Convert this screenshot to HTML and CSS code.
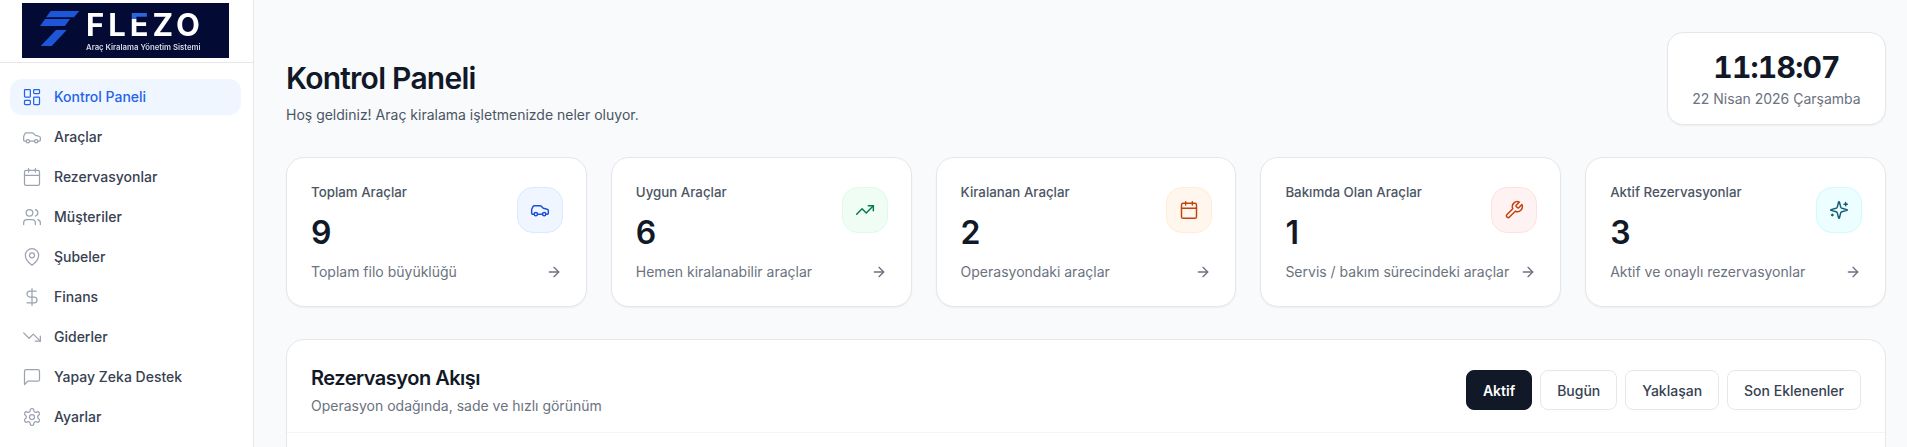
FILE: index.html
```html
<!DOCTYPE html>
<html lang="tr">
<head>
  <meta charset="UTF-8">
  <title>Kontrol Paneli</title>
  <meta name="viewport" content="width=device-width, initial-scale=1">
  <link rel="stylesheet" href="styles.css">
</head>
<body>
  <svg class="icon-defs" aria-hidden="true">
    <defs>
      <symbol id="i-dashboard" viewBox="0 0 24 24"><rect width="7" height="9" x="3" y="3" rx="1"/><rect width="7" height="5" x="14" y="3" rx="1"/><rect width="7" height="9" x="14" y="12" rx="1"/><rect width="7" height="5" x="3" y="16" rx="1"/></symbol>
      <symbol id="i-car" viewBox="0 0 24 24"><path d="M19 17h2c.6 0 1-.4 1-1v-3c0-.9-.7-1.700-1.500-1.900C18.700 10.600 16 10 16 10s-1.300-1.400-2.200-2.300c-.5-.4-1.100-.7-1.800-.7H5c-.6 0-1.100.4-1.400.9l-1.400 2.900A3.700 3.700 0 0 0 2 12v4c0 .6.4 1 1 1h2"/><circle cx="7" cy="17" r="2"/><path d="M9 17h6"/><circle cx="17" cy="17" r="2"/></symbol>
      <symbol id="i-calendar" viewBox="0 0 24 24"><path d="M8 2v4"/><path d="M16 2v4"/><rect width="18" height="18" x="3" y="4" rx="2"/><path d="M3 10h18"/></symbol>
      <symbol id="i-users" viewBox="0 0 24 24"><path d="M16 21v-2a4 4 0 0 0-4-4H6a4 4 0 0 0-4 4v2"/><circle cx="9" cy="7" r="4"/><path d="M22 21v-2a4 4 0 0 0-3-3.870"/><path d="M16 3.130a4 4 0 0 1 0 7.750"/></symbol>
      <symbol id="i-pin" viewBox="0 0 24 24"><path d="M20 10c0 6-8 12-8 12s-8-6-8-12a8 8 0 0 1 16 0Z"/><circle cx="12" cy="10" r="3"/></symbol>
      <symbol id="i-dollar" viewBox="0 0 24 24"><line x1="12" x2="12" y1="2" y2="22"/><path d="M17 5H9.500a3.500 3.500 0 0 0 0 7h5a3.500 3.500 0 0 1 0 7H6"/></symbol>
      <symbol id="i-trend-down" viewBox="0 0 24 24"><path d="m22 17-8.500-8.500-5 5L2 7"/><path d="M16 17h6v-6"/></symbol>
      <symbol id="i-trend-up" viewBox="0 0 24 24"><path d="m22 7-8.500 8.500-5-5L2 17"/><path d="M16 7h6v6"/></symbol>
      <symbol id="i-message" viewBox="0 0 24 24"><path d="M21 15a2 2 0 0 1-2 2H7l-4 4V5a2 2 0 0 1 2-2h14a2 2 0 0 1 2 2z"/></symbol>
      <symbol id="i-settings" viewBox="0 0 24 24"><path d="M12.220 2h-.440a2 2 0 0 0-2 2v.180a2 2 0 0 1-1 1.730l-.430.250a2 2 0 0 1-2 0l-.150-.080a2 2 0 0 0-2.730.730l-.220.380a2 2 0 0 0 .730 2.730l.150.100a2 2 0 0 1 1 1.720v.510a2 2 0 0 1-1 1.740l-.150.090a2 2 0 0 0-.730 2.730l.220.380a2 2 0 0 0 2.730.730l.150-.080a2 2 0 0 1 2 0l.430.250a2 2 0 0 1 1 1.730V20a2 2 0 0 0 2 2h.440a2 2 0 0 0 2-2v-.180a2 2 0 0 1 1-1.730l.430-.250a2 2 0 0 1 2 0l.150.080a2 2 0 0 0 2.730-.730l.220-.390a2 2 0 0 0-.730-2.730l-.150-.080a2 2 0 0 1-1-1.740v-.500a2 2 0 0 1 1-1.740l.150-.090a2 2 0 0 0 .730-2.730l-.220-.380a2 2 0 0 0-2.730-.730l-.150.080a2 2 0 0 1-2 0l-.430-.250a2 2 0 0 1-1-1.730V4a2 2 0 0 0-2-2z"/><circle cx="12" cy="12" r="3"/></symbol>
      <symbol id="i-wrench" viewBox="0 0 24 24"><path d="M14.700 6.300a1 1 0 0 0 0 1.400l1.600 1.600a1 1 0 0 0 1.400 0l3.770-3.770a6 6 0 0 1-7.940 7.940l-6.910 6.910a2.120 2.120 0 0 1-3-3l6.910-6.910a6 6 0 0 1 7.940-7.940l-3.760 3.760z"/></symbol>
      <symbol id="i-sparkles" viewBox="0 0 24 24"><path d="M9.940 15.500A2 2 0 0 0 8.500 14.060l-6.130-1.580a.5.500 0 0 1 0-.96L8.500 9.940A2 2 0 0 0 9.940 8.500l1.580-6.130a.5.500 0 0 1 .96 0L14.060 8.500A2 2 0 0 0 15.500 9.940l6.130 1.580a.5.500 0 0 1 0 .96L15.500 14.060a2 2 0 0 0-1.440 1.440l-1.580 6.130a.5.500 0 0 1-.96 0z"/><path d="M20 3v4"/><path d="M22 5h-4"/><path d="M4 17v2"/><path d="M5 18H3"/></symbol>
      <symbol id="i-arrow" viewBox="0 0 24 24"><path d="M5 12h14"/><path d="m12 5 7 7-7 7"/></symbol>
    </defs>
  </svg>

  <div class="layout">
    <aside class="sidebar">
      <div class="sidebar-head">
        <div class="logo">
          <svg class="logo-mark" viewBox="0 0 40 36" aria-hidden="true">
            <polygon points="10.700,0 39.300,0 34,6.300 6,6.300"/>
            <polygon points="5,8 30,8 25,15 0,15"/>
            <polygon points="16,19 26.700,19 11.700,35 .7,35"/>
          </svg>
          <div class="logo-text">
            <div class="logo-name">FL<span class="logo-e">E</span>ZO</div>
            <div class="logo-tag">Araç Kiralama Yönetim Sistemi</div>
          </div>
        </div>
      </div>
      <nav class="nav">
        <a class="nav-item active"><svg class="nav-icon"><use href="#i-dashboard"/></svg>Kontrol Paneli</a>
        <a class="nav-item"><svg class="nav-icon"><use href="#i-car"/></svg>Araçlar</a>
        <a class="nav-item"><svg class="nav-icon"><use href="#i-calendar"/></svg>Rezervasyonlar</a>
        <a class="nav-item"><svg class="nav-icon"><use href="#i-users"/></svg>Müşteriler</a>
        <a class="nav-item"><svg class="nav-icon"><use href="#i-pin"/></svg>Şubeler</a>
        <a class="nav-item"><svg class="nav-icon"><use href="#i-dollar"/></svg>Finans</a>
        <a class="nav-item"><svg class="nav-icon"><use href="#i-trend-down"/></svg>Giderler</a>
        <a class="nav-item"><svg class="nav-icon"><use href="#i-message"/></svg>Yapay Zeka Destek</a>
        <a class="nav-item"><svg class="nav-icon"><use href="#i-settings"/></svg>Ayarlar</a>
      </nav>
    </aside>

    <main class="main">
      <header class="page-head">
        <div>
          <h1>Kontrol Paneli</h1>
          <p class="page-sub">Hoş geldiniz! Araç kiralama işletmenizde neler oluyor.</p>
        </div>
        <div class="clock">
          <div class="clock-time">11:18:07</div>
          <div class="clock-date">22 Nisan 2026 Çarşamba</div>
        </div>
      </header>

      <section class="stats">
        <article class="stat">
          <div class="stat-top">
            <div>
              <div class="stat-label">Toplam Araçlar</div>
              <div class="stat-value">9</div>
            </div>
            <div class="stat-icon blue"><svg><use href="#i-car"/></svg></div>
          </div>
          <div class="stat-foot"><span>Toplam filo büyüklüğü</span><svg class="arrow"><use href="#i-arrow"/></svg></div>
        </article>
        <article class="stat">
          <div class="stat-top">
            <div>
              <div class="stat-label">Uygun Araçlar</div>
              <div class="stat-value">6</div>
            </div>
            <div class="stat-icon green"><svg><use href="#i-trend-up"/></svg></div>
          </div>
          <div class="stat-foot"><span>Hemen kiralanabilir araçlar</span><svg class="arrow"><use href="#i-arrow"/></svg></div>
        </article>
        <article class="stat">
          <div class="stat-top">
            <div>
              <div class="stat-label">Kiralanan Araçlar</div>
              <div class="stat-value">2</div>
            </div>
            <div class="stat-icon orange"><svg><use href="#i-calendar"/></svg></div>
          </div>
          <div class="stat-foot"><span>Operasyondaki araçlar</span><svg class="arrow"><use href="#i-arrow"/></svg></div>
        </article>
        <article class="stat">
          <div class="stat-top">
            <div>
              <div class="stat-label">Bakımda Olan Araçlar</div>
              <div class="stat-value">1</div>
            </div>
            <div class="stat-icon red"><svg><use href="#i-wrench"/></svg></div>
          </div>
          <div class="stat-foot"><span>Servis / bakım sürecindeki araçlar</span><svg class="arrow"><use href="#i-arrow"/></svg></div>
        </article>
        <article class="stat">
          <div class="stat-top">
            <div>
              <div class="stat-label">Aktif Rezervasyonlar</div>
              <div class="stat-value">3</div>
            </div>
            <div class="stat-icon cyan"><svg><use href="#i-sparkles"/></svg></div>
          </div>
          <div class="stat-foot"><span>Aktif ve onaylı rezervasyonlar</span><svg class="arrow"><use href="#i-arrow"/></svg></div>
        </article>
      </section>

      <section class="flow">
        <div class="flow-head">
          <div>
            <h2>Rezervasyon Akışı</h2>
            <p class="flow-sub">Operasyon odağında, sade ve hızlı görünüm</p>
          </div>
          <div class="tabs">
            <button class="tab active">Aktif</button>
            <button class="tab">Bugün</button>
            <button class="tab">Yaklaşan</button>
            <button class="tab">Son Eklenenler</button>
          </div>
        </div>
        <div class="flow-body"></div>
      </section>
    </main>
  </div>
</body>
</html>
```

FILE: styles.css
```css
:root {
  --bg: #f8fafc;
  --line: #e5e7eb;
  --ink: #111827;
  --muted: #6b7280;
  --accent: #2563eb;
}

* {
  box-sizing: border-box;
}

html, body {
  height: 100%;
}

body {
  margin: 0;
  font-family: Inter, 'Noto Sans', sans-serif;
  background-color: var(--bg);
  color: var(--ink);
  overflow: hidden;
}

.icon-defs {
  display: none;
}

.layout {
  display: flex;
  min-height: 100%;
}

/* sidebar */
.sidebar {
  flex: 0 0 254px;
  background-color: #fff;
  border-right: 1px solid var(--line);
}

.sidebar-head {
  height: 63px;
  padding: 3px 0 0 22px;
  border-bottom: 1px solid var(--line);
}

.logo {
  width: 207px;
  height: 55px;
  background-color: #030b35;
  color: #fff;
  display: flex;
  padding: 8px 0 0 18px;
  gap: 6px;
  filter: blur(0.3px);
}

.logo-mark {
  width: 40px;
  height: 36px;
  fill: #1d56d8;
  flex: none;
}

.logo-text {
  margin-top: -1px;
}

.logo-name {
  font-size: 31px;
  line-height: 30px;
  font-weight: 700;
  letter-spacing: 4px;
}

.logo-e {
  background: linear-gradient(#2b66e0 36%, #fff 36%);
  -webkit-background-clip: text;
  background-clip: text;
  color: transparent;
}

.logo-tag {
  margin-top: 2px;
  font-size: 7.75px;
  line-height: 11px;
  font-weight: 600;
  color: #d5d9e6;
  white-space: nowrap;
}

.nav {
  padding: 16px 12px 0 10px;
  display: flex;
  flex-direction: column;
  gap: 4px;
}

.nav-item {
  height: 36px;
  padding: 0 12px;
  display: flex;
  align-items: center;
  gap: 12px;
  border-radius: 12px;
  font-size: 14px;
  line-height: 20px;
  font-weight: 500;
  color: #374151;
}

.nav-item.active {
  background-color: #eff6ff;
  color: var(--accent);
}

.nav-icon {
  width: 20px;
  height: 20px;
  flex: none;
  fill: none;
  stroke: #9ca3af;
  stroke-width: 1.5;
  stroke-linecap: round;
  stroke-linejoin: round;
}

.nav-item.active .nav-icon {
  stroke: var(--accent);
}

/* main */
.main {
  flex: 1;
  min-width: 0;
  padding: 32px 21px 0 32px;
}

.page-head {
  display: flex;
  justify-content: space-between;
  align-items: flex-end;
}

h1 {
  margin: 0;
  font-size: 30px;
  line-height: 36px;
  font-weight: 600;
  letter-spacing: -0.75px;
}

.page-sub {
  margin: 9px 0 0;
  font-size: 14px;
  line-height: 20px;
  color: #4b5563;
}

.clock {
  width: 219px;
  height: 93px;
  background-color: #fff;
  border: 1px solid var(--line);
  border-radius: 16px;
  box-shadow: 0 1px 2px rgba(0,0,0,0.05);
  text-align: center;
  padding-top: 16px;
}

.clock-time {
  font-size: 30px;
  line-height: 36px;
  font-weight: 700;
  letter-spacing: -0.75px;
  font-variant-numeric: tabular-nums;
}

.clock-date {
  margin-top: 4px;
  font-size: 14px;
  line-height: 20px;
  color: var(--muted);
}

.stats {
  margin-top: 32px;
  display: grid;
  grid-template-columns: repeat(5, 1fr);
  gap: 24px;
}

.stat {
  padding: 24px;
  background-color: #fff;
  border: 1px solid var(--line);
  border-radius: 18px;
  box-shadow: 0 1px 2px rgba(0,0,0,0.05);
}

.stat-top {
  padding-top: 1px;
  display: flex;
  justify-content: space-between;
  align-items: flex-start;
}

.stat-label {
  font-size: 13.3px;
  line-height: 18px;
  font-weight: 500;
  color: #4b5563;
}

.stat-value {
  margin-top: 14px;
  font-size: 32px;
  line-height: 36px;
  font-weight: 600;
}

.stat-icon {
  width: 46px;
  height: 46px;
  margin: 4px -1px 0 0;
  border-radius: 16px;
  border: 1px solid;
  display: flex;
  align-items: center;
  justify-content: center;
}

.stat-icon svg {
  width: 20px;
  height: 20px;
  fill: none;
  stroke: currentColor;
  stroke-width: 1.75;
  stroke-linecap: round;
  stroke-linejoin: round;
}

.stat-icon.blue { background-color: #eff6ff; border-color: #dbeafe; color: #1d4ed8; }
.stat-icon.green { background-color: #f0fdf4; border-color: #dcfce7; color: #047857; }
.stat-icon.orange { background-color: #fff7ed; border-color: #ffedd5; color: #c2410c; }
.stat-icon.red { background-color: #fef2f2; border-color: #fee2e2; color: #c2410c; }
.stat-icon.cyan { background-color: #ecfeff; border-color: #cffafe; color: #155e75; }

.stat-foot {
  margin-top: 11px;
  display: flex;
  justify-content: space-between;
  align-items: center;
  font-size: 14px;
  line-height: 20px;
  color: var(--muted);
}

.arrow {
  width: 16px;
  height: 16px;
  fill: none;
  stroke: #6b7280;
  stroke-width: 2;
  stroke-linecap: round;
  stroke-linejoin: round;
}

.flow {
  margin-top: 32px;
  background-color: #fff;
  border: 1px solid var(--line);
  border-radius: 18px;
}

.flow-head {
  height: 93px;
  padding: 8px 24px 0;
  display: flex;
  justify-content: space-between;
  align-items: center;
  border-bottom: 1px solid #f3f4f6;
}

h2 {
  margin: 0;
  font-size: 20px;
  line-height: 28px;
  font-weight: 600;
  letter-spacing: -0.5px;
}

.flow-sub {
  margin: 4px 0 0;
  font-size: 14px;
  line-height: 20px;
  color: var(--muted);
}

.tabs {
  display: flex;
  gap: 8px;
}

.tab {
  height: 40px;
  padding: 0 16px;
  background-color: #fff;
  border: 1px solid var(--line);
  border-radius: 8px;
  font-family: inherit;
  font-size: 14px;
  font-weight: 500;
  color: #374151;
}

.tab.active {
  background-color: var(--ink);
  border-color: var(--ink);
  color: #fff;
  font-weight: 600;
}

.flow-body {
  height: 200px;
}
```
